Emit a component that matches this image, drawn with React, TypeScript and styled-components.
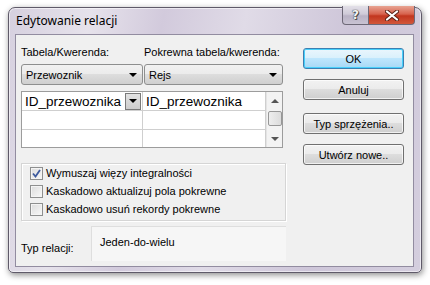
import React from "react";
import styled, { createGlobalStyle, css } from "styled-components";

const uiFont = `"Liberation Sans", Arial, sans-serif`;

const GlobalStyle = createGlobalStyle`
  html, body {
    margin: 0;
    padding: 0;
    background: #ffffff;
  }
  body {
    font-family: ${uiFont};
    font-size: 11px;
    color: #000;
  }
`;

const Page = styled.div`
  width: 430px;
  height: 285px;
  padding: 7px 0 0 8px;
  box-sizing: border-box;
`;

const Window = styled.div`
  width: 414px;
  height: 266px;
  box-sizing: border-box;
  border: 1px solid #5f5a69;
  border-radius: 7px 7px 5px 5px;
  background: linear-gradient(100deg, #d6d0df 0%, #e6e2eb 18%, #d2cadc 34%, #e0dbe7 52%, #cec6d9 75%, #d4cede 100%);
  box-shadow: 1px 2px 6px rgba(0, 0, 0, 0.45), inset 0 0 0 1px rgba(255, 255, 255, 0.55);
  display: flex;
  flex-direction: column;
`;

const TitleBar = styled.div`
  height: 26px;
  display: flex;
  align-items: flex-start;
  padding-left: 7px;
`;

const TitleText = styled.div`
  font-family: "Noto Sans", ${uiFont};
  font-size: 12px;
  line-height: 26px;
  color: #000;
  flex: 1;
`;

const CaptionButtons = styled.div`
  display: flex;
  margin-right: 6px;
  margin-top: -2px;
`;

const CaptionButton = styled.div<{ $close?: boolean }>`
  height: 19px;
  box-sizing: border-box;
  display: flex;
  align-items: center;
  justify-content: center;
  border: 1px solid #6d6877;
  border-top: none;
  ${(p) =>
    p.$close
      ? css`
          width: 46px;
          border-left: none;
          border-radius: 0 0 4px 0;
          background: linear-gradient(#e8a493 0%, #d7624d 45%, #c2361f 55%, #d2573a 100%);
        `
      : css`
          width: 27px;
          border-radius: 0 0 0 4px;
          background: linear-gradient(#e3e0e8 0%, #cfcad8 45%, #b9b2c5 55%, #c9c3d3 100%);
        `}
`;

const HelpGlyph = styled.span`
  font-family: "DejaVu Sans", sans-serif;
  font-weight: bold;
  font-size: 12px;
  color: #f4f4f4;
  text-shadow: 0 0 1px #333, 0 0 1px #333, 1px 1px 0 #555;
`;

const Client = styled.div`
  flex: 1;
  margin: 0 7px 5px 6px;
  border: 1px solid #928ca0;
  background: #f0f0f0;
  display: grid;
  grid-template-columns: 265px 101px;
  column-gap: 17px;
  padding: 11px 7px 5px 5px;
`;

const LeftColumn = styled.div`
  display: flex;
  flex-direction: column;
`;

const PairRow = styled.div`
  display: grid;
  grid-template-columns: 122px 139px;
  column-gap: 1px;
`;

const FieldLabel = styled.div`
  line-height: 13px;
  height: 13px;
  margin-bottom: 5px;
  white-space: nowrap;
`;

const Combo = styled.div`
  height: 21px;
  box-sizing: border-box;
  border: 1px solid #8e8f8f;
  border-radius: 3px;
  background: linear-gradient(#f2f2f2 0%, #ebebeb 49%, #dddddd 50%, #cfcfcf 100%);
  display: flex;
  align-items: center;
  padding: 0 5px 0 4px;
  justify-content: space-between;
`;

const Caret = styled.span<{ $up?: boolean; $color?: string }>`
  width: 0;
  height: 0;
  border-left: 4px solid transparent;
  border-right: 4px solid transparent;
  ${(p) =>
    p.$up
      ? css`border-bottom: 4px solid ${p.$color || "#000"};`
      : css`border-top: 4px solid ${p.$color || "#000"};`}
`;

const Datasheet = styled.div`
  margin-top: 6px;
  width: 262px;
  height: 57px;
  box-sizing: border-box;
  border: 1px solid #9c9c9c;
  background: #fff;
  display: grid;
  grid-template-columns: 121px 1fr 16px;
  grid-template-rows: 19px 19px 1fr;
`;

const Cell = styled.div<{ $last?: boolean }>`
  border-right: 1px solid #cfcfcf;
  border-bottom: ${(p) => (p.$last ? "none" : "1px solid #cfcfcf")};
  display: flex;
  align-items: center;
  justify-content: space-between;
  font-size: 13.5px;
  padding-left: 3px;
  padding-right: 1px;
  overflow: hidden;
  white-space: nowrap;
`;

const CellDrop = styled.div`
  width: 16px;
  height: 17px;
  box-sizing: border-box;
  border: 1px solid #7a7a7a;
  background: linear-gradient(#e2e2e2, #cdcdcd);
  display: flex;
  align-items: center;
  justify-content: center;
  flex-shrink: 0;
`;

const ScrollBar = styled.div`
  grid-column: 3;
  grid-row: 1 / span 3;
  background: #f3f3f3;
  border-left: 1px solid #e4e4e4;
  display: flex;
  flex-direction: column;
  align-items: center;
  padding: 0 0 0 0;
`;

const ScrollArrow = styled.div`
  height: 17px;
  width: 100%;
  display: flex;
  align-items: center;
  justify-content: center;
`;

const ScrollThumb = styled.div`
  width: 14px;
  height: 15px;
  box-sizing: border-box;
  border: 1px solid #979797;
  border-radius: 2px;
  background: linear-gradient(90deg, #eeeeee, #dcdcdc);
  margin: 2px 0;
`;

const GroupBox = styled.div`
  margin-top: 15px;
  height: 58px;
  box-sizing: border-box;
  border: 1px solid #d5d5d5;
  box-shadow: inset 1px 1px 0 #ffffff, 1px 1px 0 #ffffff;
  padding: 0 0 0 8px;
  display: flex;
  flex-direction: column;
`;

const CheckRow = styled.label`
  height: 18px;
  display: flex;
  align-items: center;
  gap: 3px;
`;

const CheckBox = styled.span`
  width: 13px;
  height: 13px;
  box-sizing: border-box;
  border: 1px solid #8e8f8f;
  background: linear-gradient(135deg, #dcdcdc, #f8f8f8);
  box-shadow: inset 0 0 0 1px #f4f4f4;
  display: flex;
  align-items: center;
  justify-content: center;
`;

const RelationRow = styled.div`
  margin-top: 5px;
  display: flex;
  align-items: stretch;
  height: 35px;
`;

const RelationLabel = styled.div`
  width: 70px;
  display: flex;
  align-items: flex-end;
  padding-bottom: 7px;
`;

const RelationValue = styled.div`
  flex: 1;
  background: #f6f6f6;
  border-left: 1px solid #dedede;
  border-top: 1px solid #dedede;
  padding: 9px 0 0 8px;
`;

const RightColumn = styled.div`
  display: flex;
  flex-direction: column;
  padding-top: 2px;
`;

const Button = styled.div<{ $default?: boolean; $space?: number }>`
  height: 21px;
  box-sizing: border-box;
  margin-top: ${(p) => p.$space ?? 0}px;
  border: 1px solid #707070;
  border-radius: 3px;
  display: flex;
  align-items: center;
  justify-content: center;
  background: linear-gradient(#f2f2f2 0%, #ebebeb 49%, #dddddd 50%, #cfcfcf 100%);
  box-shadow: inset 0 0 0 1px rgba(255, 255, 255, 0.7);
  ${(p) =>
    p.$default &&
    css`
      border-color: #3c7fb1;
      background: linear-gradient(#eaf6fd 0%, #d9f0fc 49%, #bee6fd 50%, #a7d9f5 100%);
      box-shadow: inset 0 0 0 1px #48d0fb;
    `}
`;

const CloseIcon = () => (
  <svg width="14" height="11" viewBox="0 0 14 11">
    <path d="M2 1.5 L12 9.5 M12 1.5 L2 9.5" stroke="#5a2014" strokeWidth="4" strokeLinecap="round" />
    <path d="M2 1.5 L12 9.5 M12 1.5 L2 9.5" stroke="#ffffff" strokeWidth="2.2" strokeLinecap="round" />
  </svg>
);

const CheckMark = () => (
  <svg width="9" height="9" viewBox="0 0 9 9">
    <path d="M1 4.5 L3.5 7.5 L8 1" fill="none" stroke="#3d5a9e" strokeWidth="1.8" />
  </svg>
);

const App: React.FC = () => {
  return (
    <Page>
      <GlobalStyle />
      <Window>
        <TitleBar>
          <TitleText>Edytowanie relacji</TitleText>
          <CaptionButtons>
            <CaptionButton>
              <HelpGlyph>?</HelpGlyph>
            </CaptionButton>
            <CaptionButton $close>
              <CloseIcon />
            </CaptionButton>
          </CaptionButtons>
        </TitleBar>
        <Client>
          <LeftColumn>
            <PairRow>
              <FieldLabel>Tabela/Kwerenda:</FieldLabel>
              <FieldLabel>Pokrewna tabela/kwerenda:</FieldLabel>
            </PairRow>
            <PairRow>
              <Combo>
                <span>Przewoznik</span>
                <Caret />
              </Combo>
              <Combo>
                <span>Rejs</span>
                <Caret />
              </Combo>
            </PairRow>
            <Datasheet>
              <Cell>
                <span>ID_przewoznika</span>
                <CellDrop>
                  <Caret />
                </CellDrop>
              </Cell>
              <Cell>ID_przewoznika</Cell>
              <ScrollBar>
                <ScrollArrow>
                  <Caret $up $color="#555" />
                </ScrollArrow>
                <ScrollThumb />
                <div style={{ flex: 1 }} />
                <ScrollArrow>
                  <Caret $color="#555" />
                </ScrollArrow>
              </ScrollBar>
              <Cell />
              <Cell />
              <Cell $last />
              <Cell $last />
            </Datasheet>
            <GroupBox>
              <CheckRow>
                <CheckBox>
                  <CheckMark />
                </CheckBox>
                Wymuszaj więzy integralności
              </CheckRow>
              <CheckRow>
                <CheckBox />
                Kaskadowo aktualizuj pola pokrewne
              </CheckRow>
              <CheckRow>
                <CheckBox />
                Kaskadowo usuń rekordy pokrewne
              </CheckRow>
            </GroupBox>
            <RelationRow>
              <RelationLabel>Typ relacji:</RelationLabel>
              <RelationValue>Jeden-do-wielu</RelationValue>
            </RelationRow>
          </LeftColumn>
          <RightColumn>
            <Button $default>OK</Button>
            <Button $space={10}>Anuluj</Button>
            <Button $space={13}>Typ sprzężenia..</Button>
            <Button $space={10}>Utwórz nowe..</Button>
          </RightColumn>
        </Client>
      </Window>
    </Page>
  );
};

export default App;
